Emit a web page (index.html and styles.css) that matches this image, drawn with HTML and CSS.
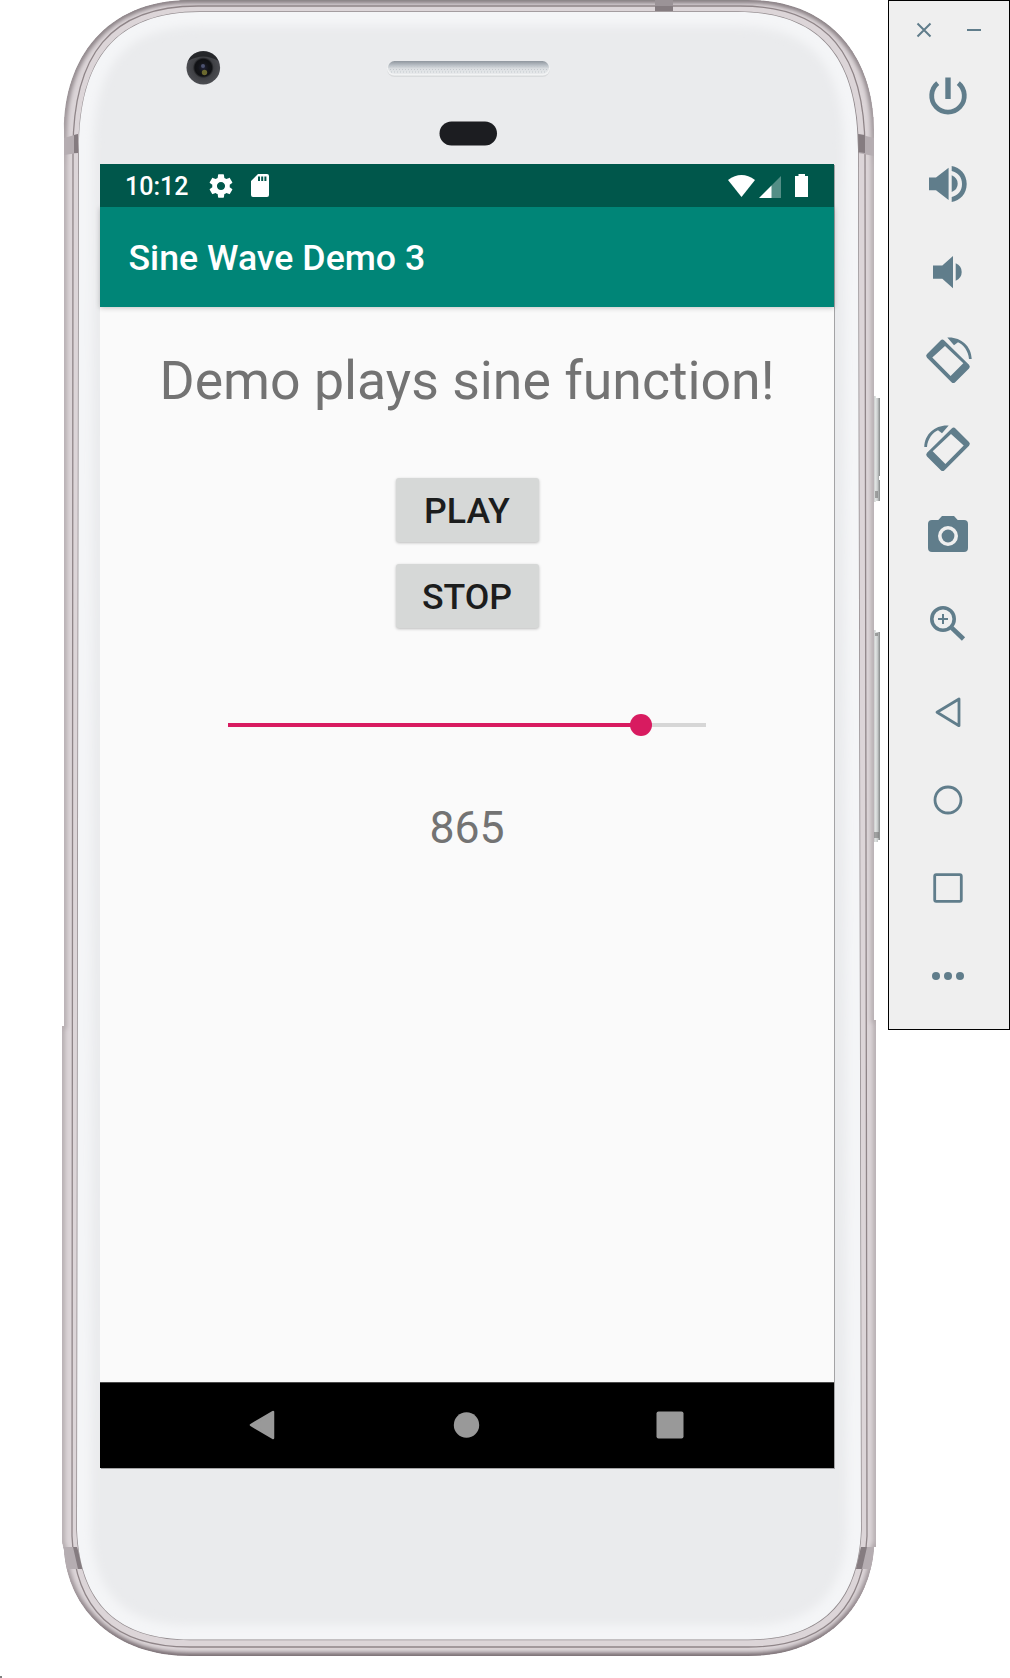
FILE: index.html
```html
<!DOCTYPE html>
<html lang="en">
<head>
<meta charset="utf-8">
<title>Sine Wave Demo 3</title>
<link rel="stylesheet" href="styles.css">
</head>
<body>
<main class="stage">
  <section class="phone">
    <svg class="shell" viewBox="0 0 888 1678" aria-hidden="true">
      <defs>
        <path id="body" d="M64 130C64 60 105 0 190 0H748C833 0 874 60 874 130V1020H876V1547H874C870 1610 823 1656 748 1656H190C115 1656 68 1610 64 1550L62 1542V1026H64Z"/>
        <path id="panel" d="M79 150C79 60 115 12 200 12H738C822 12 858 60 858 150L861 1530C858 1605 818 1639.500 748 1639.500H190C120 1639.500 80 1605 77 1530Z"/>
        <clipPath id="bodyClip"><use href="#body" shape-rendering="crispEdges"/></clipPath>
        <clipPath id="panelClip"><use href="#panel"/></clipPath>
        <filter id="soft" x="-10%" y="-10%" width="120%" height="120%"><feGaussianBlur stdDeviation="5"/></filter>
        <filter id="edge" x="-10%" y="-10%" width="120%" height="120%"><feGaussianBlur stdDeviation="2"/></filter>
        <linearGradient id="rim" x1="0" y1="0" x2="0" y2="1">
          <stop offset="0" stop-color="#7f767a"/><stop offset=".06" stop-color="#8f868a"/>
          <stop offset=".1" stop-color="#b5adb0"/><stop offset=".93" stop-color="#b5adb0"/>
          <stop offset=".97" stop-color="#8a7f84"/><stop offset="1" stop-color="#6e6368"/>
        </linearGradient>
        <linearGradient id="grille" x1="0" y1="0" x2="0" y2="1">
          <stop offset="0" stop-color="#8f969e"/><stop offset=".35" stop-color="#bcc2c8"/><stop offset=".6" stop-color="#dcdfe2"/><stop offset="1" stop-color="#e8eaec"/>
        </linearGradient>
        <linearGradient id="key" x1="0" y1="0" x2="1" y2="0">
          <stop offset="0" stop-color="#a9aaaa"/><stop offset=".3" stop-color="#e3e6e5"/><stop offset=".6" stop-color="#ced2d2"/><stop offset="1" stop-color="#858888"/>
        </linearGradient>
        <radialGradient id="lens">
          <stop offset="0" stop-color="#22243a"/><stop offset=".3" stop-color="#141519"/><stop offset=".5" stop-color="#101114"/><stop offset=".62" stop-color="#3f4044"/><stop offset="1" stop-color="#4c4d52"/>
        </radialGradient>
      </defs>
      <path d="M873 396h3v2h4v78h-1v4h1v21h-4v1h-3zM873 630h3v2h4v208h-2v2h-5z" fill="url(#key)" shape-rendering="crispEdges"/>
      <path d="M875 491h3v7h-3zM875 633h3v3h-3zM874 832h5v6h-5z" fill="#777" opacity=".6"/>
      <use href="#body" fill="#dcd5d8" shape-rendering="crispEdges"/>
      <g clip-path="url(#bodyClip)">
        <use href="#body" fill="none" stroke="url(#rim)" stroke-width="6" filter="url(#edge)"/>
        <path d="M180 .5H748" stroke="#8d8789"/>
        <path d="M73 150C73 55 110 6 198 6H740C828 6 865 55 865 150L867 1536C863 1610 823 1647 748 1647H190C115 1647 75 1610 72 1536Z" fill="none" stroke="#8f8588" stroke-width="1.300"/>
        <path d="M64 138l14-4v19l-14 2zM858 134l16 4v18l-16-3zM62 1547h15l6 22H66zM861 1547h16l-4 22h-17z" fill="#b5adb1"/>
        <path d="M74 135l4-1v19h-4zM858 134l7 1v18l-7-1zM73 1547h4l6 22h-5zM861 1547h6l-5 22h-6zM655 6h18v5h-18z" fill="#857c80"/>
        <path d="M655 0h18v6h-18z" fill="#9b9397"/>
      </g>
      <use href="#panel" fill="#eaebed" stroke="#918a8d" stroke-width="1.500"/>
      <g clip-path="url(#panelClip)">
        <use href="#panel" fill="none" stroke="#f4f5f7" stroke-width="28" filter="url(#soft)"/>
      </g>
      <circle cx="203.300" cy="67.700" r="16.800" fill="url(#lens)"/>
      <path d="M188 61A16.800 16.800 0 0 1 218.600 61Q203 52 188 61Z" fill="#17181b" opacity=".7"/>
      <circle cx="203" cy="66" r="2" fill="#4d5370"/>
      <circle cx="204.500" cy="72.500" r="2.700" fill="#6b692f"/>
      <rect x="387" y="62" width="163" height="15" rx="7.500" fill="#d9dbdd"/>
      <rect x="387" y="61" width="163" height="14.500" rx="7.250" fill="#f2f3f4"/>
      <rect x="388" y="61" width="161" height="13" rx="6.500" fill="url(#grille)"/>
      <path d="M390 66.500H547M390 69.500H547M391 72H546" stroke="#c3c8cd" stroke-width="1" stroke-dasharray="1 2"/>
      <rect x="439.500" y="121.500" width="57.500" height="24" rx="12" fill="#1c1d21"/>
      <path d="M0 1676h2v2H0z" fill="#808080"/>
    </svg>

    <div class="screen">
      <header class="status">
        <span class="clock">10:12</span>
        <svg class="gear" viewBox="0 0 24 24"><path fill="#fff" d="M19.430 12.980c.04-.32.07-.64.07-.98s-.03-.66-.07-.98l2.110-1.650c.19-.15.24-.42.12-.64l-2-3.460c-.12-.22-.39-.3-.61-.22l-2.490 1c-.52-.4-1.080-.73-1.690-.98l-.38-2.650C14.460 2.180 14.250 2 14 2h-4c-.25 0-.46.18-.49.42l-.38 2.650c-.61.25-1.170.59-1.690.98l-2.490-1c-.23-.09-.49 0-.61.22l-2 3.460c-.13.22-.07.49.12.64l2.110 1.650c-.04.32-.07.65-.07.98s.03.66.07.98l-2.110 1.650c-.19.15-.24.42-.12.64l2 3.460c.12.22.39.3.61.22l2.490-1c.52.4 1.080.73 1.690.98l.38 2.650c.03.24.24.42.49.42h4c.25 0 .46-.18.49-.42l.38-2.650c.61-.25 1.170-.59 1.690-.98l2.490 1c.23.09.49 0 .61-.22l2-3.460c.12-.22.07-.49-.12-.64l-2.110-1.650zM12 15.500c-1.930 0-3.500-1.570-3.500-3.500s1.570-3.500 3.500-3.500 3.500 1.570 3.500 3.500-1.570 3.500-3.500 3.500z"/></svg>
        <svg class="card" viewBox="0 0 18 23"><path fill="#fff" fill-rule="evenodd" d="M7 0H16Q18 0 18 2V21Q18 23 16 23H2Q0 23 0 21V7ZM7 2.500V7H9V2.500ZM10.200 2.500V7H12.200V2.500ZM13.400 2.500V7H15.400V2.500Z"/></svg>
        <span class="grow"></span>
        <svg class="wifi" viewBox="0 0 27 22"><path fill="#fff" d="M13.500 22L0 5Q13.500-5 27 5Z"/></svg>
        <svg class="signal" viewBox="0 0 22 22"><path fill="#fff" opacity=".33" d="M22 0V22H12V10Z"/><path fill="#fff" d="M12.500 9.500V22H0Z"/></svg>
        <svg class="battery" viewBox="0 0 13 23"><path fill="#fff" d="M3.500 0H10V2H13V23H0V2H3.500Z"/></svg>
      </header>
      <div class="appbar"><h1 class="title">Sine Wave Demo 3</h1></div>
      <div class="content">
        <p class="headline">Demo plays sine function!</p>
        <div class="buttons">
          <button class="btn">PLAY</button>
          <button class="btn">STOP</button>
        </div>
        <div class="slider"><span class="filled" style="width:86.500%"></span><span class="thumb"></span><span class="rest"></span></div>
        <p class="value">865</p>
      </div>
      <nav class="navbar">
        <svg class="navicon" viewBox="0 0 30 30"><path d="M4 15L26 2V28Z" fill="#999" stroke="#999" stroke-width="2.500" stroke-linejoin="round"/></svg>
        <svg class="navicon" viewBox="0 0 30 30"><circle cx="15.500" cy="15" r="12.700" fill="#999"/></svg>
        <svg class="navicon" viewBox="0 0 30 30"><rect x="1.500" y="1.500" width="27" height="27" rx="2" fill="#999"/></svg>
      </nav>
    </div>
  </section>

  <aside class="tools">
    <div class="window">
      <svg class="mini" viewBox="0 0 16 16"><path d="M1.500 1.500L14.500 14.500M14.500 1.500L1.500 14.500"/></svg>
      <svg class="mini" viewBox="0 0 16 16"><path d="M1 8H15"/></svg>
    </div>
    <svg class="tool" viewBox="0 0 48 48"><path class="line" stroke-width="4.800" d="M13.700 11.200A16.300 16.300 0 1 0 34.300 11.200"/><path d="M21.300 5.500h5.400V27h-5.400z"/></svg>
    <svg class="tool" viewBox="0 0 48 48"><path d="M5 17.600H12L24.600 7.700V40L12 30.200H5ZM27.700 15.300Q33.700 18 33.700 23.700T27.700 32ZM27.700 6C36 7.500 42.700 14 42.700 24S36 40.500 27.700 42V37C34 35.500 38 31 38 24S34 12.500 27.700 11Z"/></svg>
    <svg class="tool" viewBox="0 0 48 48"><path d="M9 17.500H18.300L29 8V40.300L18.300 30.700H9ZM31.700 15.300Q37.700 18 37.700 24T31.700 32.700Z"/></svg>
    <svg class="tool" viewBox="0 0 48 48"><path fill-rule="evenodd" d="M16.500 4.500Q18.300 2.500 20.300 4.500L45 28.800Q46.700 30.700 45 32.500L31.200 46.200Q29.300 48 27.500 46.200L3 21.800Q1.200 19.800 3 18ZM21 10L8.300 21.600L26.600 40L39.300 27.300Z"/><path d="M23.300 1.500C36 .5 47.500 9.500 47.700 23H45C44.500 15 39 8 34 6.200L30 9.200Z"/></svg>
    <svg class="tool" viewBox="0 0 48 48"><g transform="matrix(-1 0 0 1 48 0)"><path fill-rule="evenodd" d="M16.500 4.500Q18.300 2.500 20.300 4.500L45 28.800Q46.700 30.700 45 32.500L31.200 46.200Q29.300 48 27.500 46.200L3 21.800Q1.200 19.800 3 18ZM21 10L8.300 21.600L26.600 40L39.300 27.300Z"/><path d="M23.300 1.500C36 .5 47.500 9.500 47.700 23H45C44.500 15 39 8 34 6.200L30 9.200Z"/></g></svg>
    <svg class="tool" viewBox="0 0 48 48"><path fill-rule="evenodd" d="M18 4H30L33.700 8H40Q44 8 44 12V36Q44 40 40 40H8Q4 40 4 36V12Q4 8 8 8H14.300ZM24 14A10 10 0 1 0 24 34A10 10 0 1 0 24 14Z"/><circle cx="24" cy="24" r="6.400"/></svg>
    <svg class="tool" viewBox="0 0 48 48"><circle class="line" cx="19" cy="19" r="11.200" stroke-width="3.600"/><path class="line" stroke-width="2" d="M14 19H24M19 14V24"/><path class="line" stroke-width="4.600" d="M27.800 27.800L39.500 39"/></svg>
    <svg class="tool" viewBox="0 0 48 48"><path class="line" stroke-width="2.800" stroke-linejoin="round" d="M13 24.300L35 11V37.700Z"/></svg>
    <svg class="tool" viewBox="0 0 48 48"><circle class="line" cx="24" cy="24" r="13" stroke-width="2.800"/></svg>
    <svg class="tool" viewBox="0 0 48 48"><rect class="line" x="10.700" y="10.700" width="26.600" height="26.600" rx="1.500" stroke-width="2.800"/></svg>
    <svg class="tool" viewBox="0 0 48 48"><circle cx="12" cy="24" r="4"/><circle cx="24" cy="24" r="4"/><circle cx="36" cy="24" r="4"/></svg>
  </aside>
</main>
</body>
</html>
```
FILE: styles.css
```css
* { box-sizing: border-box; }
body { margin: 0; background: #fff; font-family: Roboto, "Liberation Sans", sans-serif; }
.stage { display: flex; align-items: flex-start; width: 1010px; height: 1678px; overflow: hidden; }

.phone { position: relative; width: 888px; height: 1678px; padding: 164px 0 0 100px; }
.shell { position: absolute; left: 0; top: 0; width: 888px; height: 1678px; }
.screen {
  position: relative;
  display: flex; flex-direction: column;
  width: 734px; height: 1304px;
  background: #fafafa;
  box-shadow: 1px 1px 0 #a3a3a5;
}

.status { position: relative; z-index: 1; display: flex; align-items: center; height: 43px; padding: 0 26px 0 25px; background: #00574b; color: #fff; }
.clock { font-size: 25px; font-weight: 500; line-height: 43px; padding-top: 1px; }
.gear { width: 28px; height: 28px; margin-left: 19px; }
.card { width: 18px; height: 23px; margin-left: 16px; }
.grow { flex: 1; }
.wifi { width: 27px; height: 22px; }
.signal { width: 22px; height: 22px; margin: 2px 14px 0 4px; }
.battery { width: 13px; height: 23px; }

.appbar {
  position: relative;
  display: flex; align-items: center;
  height: 99.500px; padding: 0 28.500px;
  background: #008577; color: #fff;
  box-shadow: 0 1px 5px rgba(0, 0, 0, .22);
}
.title { margin: 3px 0 0; font-size: 35.700px; font-weight: 500; line-height: 42px; }

.content { flex: 1; display: flex; flex-direction: column; align-items: center; padding-top: 42.500px; }
.headline { margin: 0; font-size: 53.600px; line-height: 63px; color: #737373; white-space: nowrap; }
.buttons { display: flex; flex-direction: column; gap: 21.500px; margin-top: 66px; }
.btn {
  width: 143px; height: 64px; padding: 3px 0 0;
  border: 0; border-radius: 3px;
  background: #d6d8d7; color: #1c1d1d;
  box-shadow: 0 1px 3px rgba(0, 0, 0, .25);
  font: 500 35.700px/61px Roboto, sans-serif;
}
.slider { display: flex; align-items: center; width: 478px; height: 22px; margin-top: 86.500px; }
.filled { height: 4px; background: #d81b60; }
.thumb { width: 22px; height: 22px; margin: 0 -11px; border-radius: 50%; background: #d81b60; z-index: 1; }
.rest { flex: 1; height: 4px; background: #d6d6d6; }
.value { margin: 66px 0 0; font-size: 44.600px; line-height: 52px; color: #737373; }

.navbar { display: flex; align-items: center; justify-content: space-between; height: 86px; padding: 0 149px 2px 147px; background: #000; border-top: 1px solid #4a4a4a; }
.navicon { width: 30px; height: 30px; }

.tools {
  display: flex; flex-direction: column; align-items: center;
  width: 122px; height: 1030px; padding-right: 2px;
  background: #efefef; border: 1px solid #000;
}
.window { flex: none; display: flex; justify-content: center; gap: 34px; height: 71px; padding: 21px 0 0 2px; }
.mini { width: 16px; height: 16px; fill: none; stroke: #607d8b; stroke-width: 2; }
.tool { flex: none; width: 48px; height: 48px; margin-bottom: 40px; fill: #607d8b; }
.tool:last-child { margin-bottom: 0; }
.line { fill: none; stroke: #607d8b; }
```
